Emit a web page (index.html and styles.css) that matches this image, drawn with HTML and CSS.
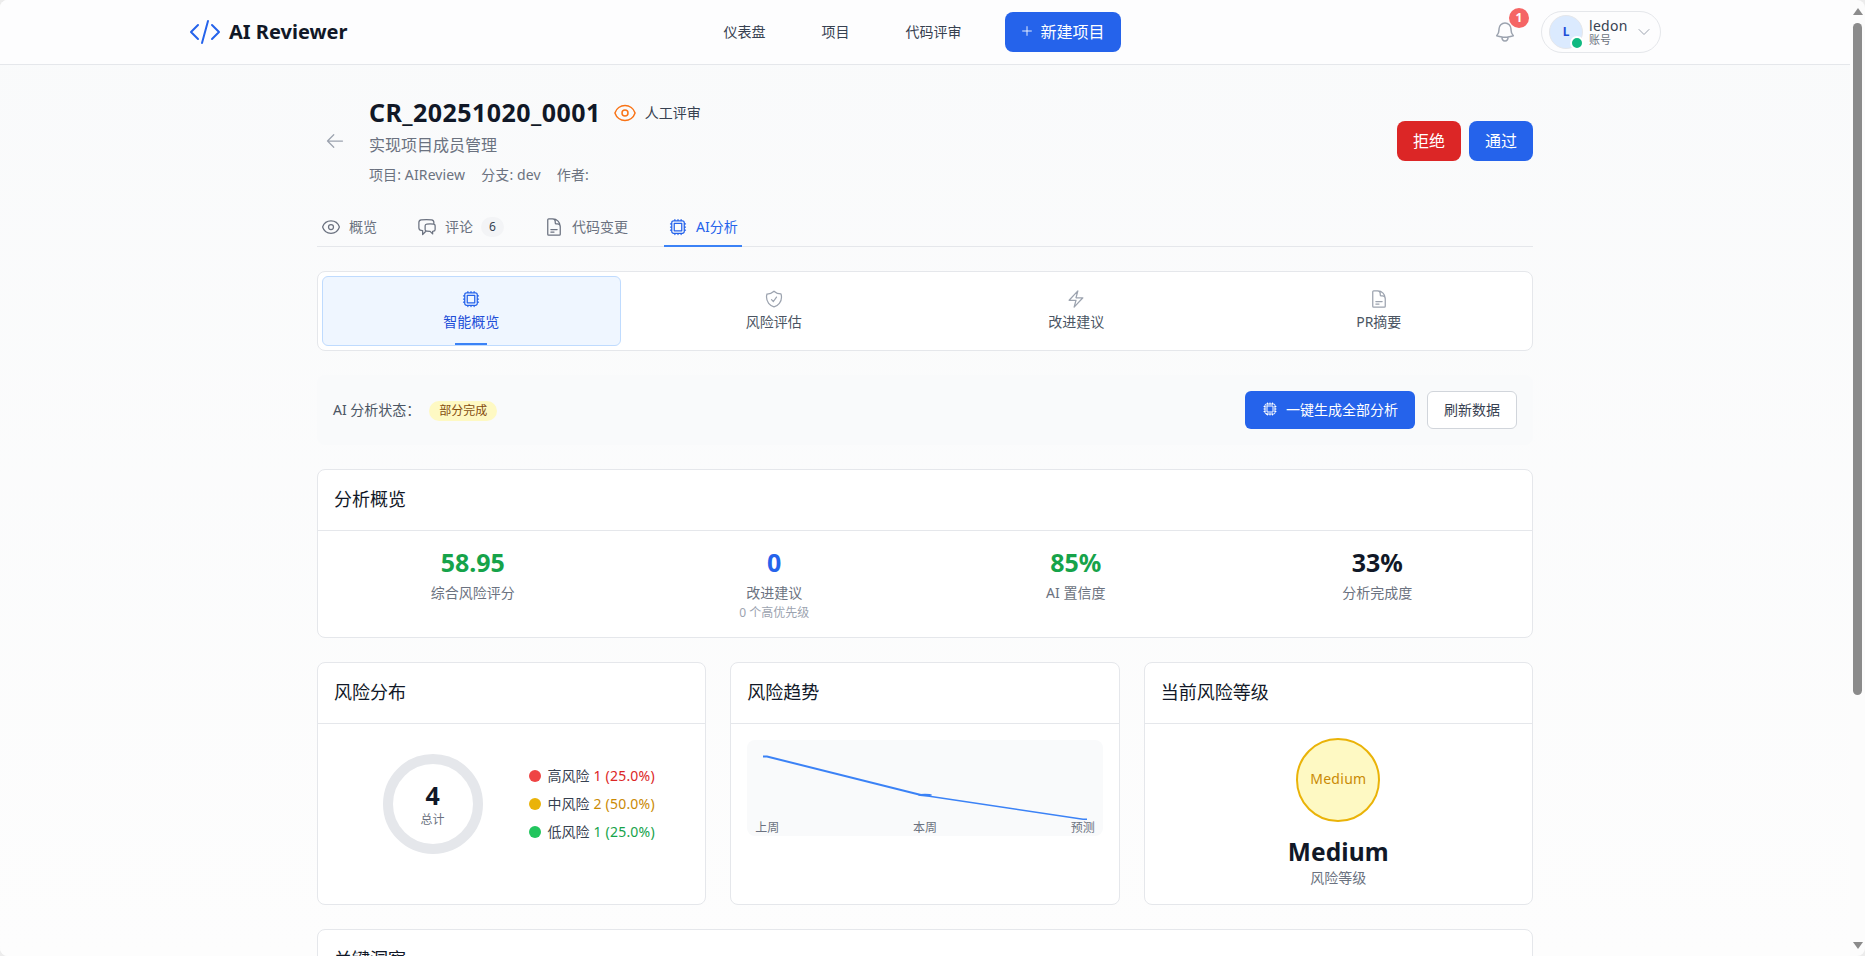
FILE: index.html
```html
<!DOCTYPE html>
<html lang="zh-CN">

<head>
  <meta charset="UTF-8">
  <meta name="viewport" content="width=device-width, initial-scale=1.0">
  <title>AI Reviewer</title>
  <link rel="stylesheet" href="styles.css">
</head>

<body>
  <!-- heroicons -->
  <svg class="sprite">
    <symbol id="i-code" viewBox="0 0 24 24"><path d="M17.25 6.75 22.5 12l-5.25 5.25m-10.5 0L1.5 12l5.25-5.25m7.5-3-4.5 16.5" /></symbol>
    <symbol id="i-plus" viewBox="0 0 24 24"><path d="M12 4.5v15m7.5-7.5h-15" /></symbol>
    <symbol id="i-bell" viewBox="0 0 24 24"><path d="M14.857 17.082a23.848 23.848 0 0 0 5.454-1.31A8.967 8.967 0 0 1 18 9.75V9A6 6 0 0 0 6 9v.75a8.967 8.967 0 0 1-2.312 6.022c1.733.64 3.56 1.085 5.455 1.31m5.714 0a24.255 24.255 0 0 1-5.714 0m5.714 0a3 3 0 1 1-5.714 0" /></symbol>
    <symbol id="i-down" viewBox="0 0 24 24"><path d="m19.5 8.25-7.5 7.5-7.5-7.5" /></symbol>
    <symbol id="i-back" viewBox="0 0 24 24"><path d="M10.5 19.5 3 12m0 0 7.5-7.5M3 12h18" /></symbol>
    <symbol id="i-eye" viewBox="0 0 24 24"><path d="M2.036 12.322a1.012 1.012 0 0 1 0-.639C3.423 7.51 7.36 4.5 12 4.5c4.638 0 8.573 3.007 9.963 7.178.07.207.07.431 0 .639C20.577 16.49 16.64 19.5 12 19.5c-4.638 0-8.573-3.007-9.963-7.178Z" /><path d="M15 12a3 3 0 1 1-6 0 3 3 0 0 1 6 0Z" /></symbol>
    <symbol id="i-chat" viewBox="0 0 24 24"><path d="M20.25 8.511c.884.284 1.5 1.128 1.5 2.097v4.286c0 1.136-.847 2.1-1.98 2.193-.34.027-.68.052-1.02.072v3.091l-3-3c-1.354 0-2.694-.055-4.02-.163a2.115 2.115 0 0 1-.825-.242m9.345-8.334a2.126 2.126 0 0 0-.476-.095 48.64 48.64 0 0 0-8.048 0c-1.131.094-1.976 1.057-1.976 2.192v4.286c0 .837.46 1.58 1.155 1.951m9.345-8.334V6.637c0-1.621-1.152-3.026-2.76-3.235A48.455 48.455 0 0 0 11.25 3c-2.115 0-4.198.137-6.24.402-1.608.209-2.76 1.614-2.76 3.235v6.226c0 1.621 1.152 3.026 2.76 3.235.577.075 1.157.14 1.74.194V21l4.155-4.155" /></symbol>
    <symbol id="i-doc" viewBox="0 0 24 24"><path d="M19.5 14.25v-2.625a3.375 3.375 0 0 0-3.375-3.375h-1.5A1.125 1.125 0 0 1 13.5 7.125v-1.5a3.375 3.375 0 0 0-3.375-3.375H8.25m0 12.75h7.5m-7.5 3H12M10.5 2.25H5.625c-.621 0-1.125.504-1.125 1.125v17.25c0 .621.504 1.125 1.125 1.125h12.75c.621 0 1.125-.504 1.125-1.125V11.25a9 9 0 0 0-9-9Z" /></symbol>
    <symbol id="i-chip" viewBox="0 0 24 24"><path d="M8.25 3v1.5M4.5 8.25H3m18 0h-1.5M4.5 12H3m18 0h-1.5m-15 3.75H3m18 0h-1.5M8.25 19.5V21M12 3v1.5m0 15V21m3.75-18v1.5m0 15V21m-9-1.5h10.5a2.25 2.25 0 0 0 2.25-2.25V6.75a2.25 2.25 0 0 0-2.25-2.25H6.75A2.25 2.25 0 0 0 4.5 6.75v10.5a2.25 2.25 0 0 0 2.25 2.25Zm.75-12h9v9h-9v-9Z" /></symbol>
    <symbol id="i-shield" viewBox="0 0 24 24"><path d="M9 12.75 11.25 15 15 9.75m-3-7.036A11.959 11.959 0 0 1 3.598 6 11.99 11.99 0 0 0 3 9.749c0 5.592 3.824 10.29 9 11.623 5.176-1.332 9-6.03 9-11.622 0-1.31-.21-2.571-.598-3.751h-.152c-3.196 0-6.1-1.248-8.25-3.285Z" /></symbol>
    <symbol id="i-bolt" viewBox="0 0 24 24"><path d="m3.75 13.5 10.5-11.25L12 10.5h8.25L9.75 21.75 12 13.5H3.75Z" /></symbol>
  </svg>

  <div class="page">
    <header class="topbar">
      <div class="topbar-inner">
        <a class="brand"><svg class="icon icon-32"><use href="#i-code" /></svg><span>AI Reviewer</span></a>
        <nav class="nav">
          <a>仪表盘</a>
          <a>项目</a>
          <a>代码评审</a>
          <button class="btn btn-primary btn-new"><svg class="icon icon-14"><use href="#i-plus" /></svg>新建项目</button>
        </nav>
        <div class="topbar-right">
          <div class="bell"><svg class="icon icon-24"><use href="#i-bell" /></svg><span class="bell-count">1</span></div>
          <div class="user">
            <div class="avatar">L<i class="online"></i></div>
            <div class="user-text"><span class="user-name">ledon</span><span class="user-role">账号</span></div>
            <svg class="icon icon-16"><use href="#i-down" /></svg>
          </div>
        </div>
      </div>
    </header>

    <main class="container">
      <section class="review-head">
        <svg class="icon icon-20 back"><use href="#i-back" /></svg>
        <div class="review-info">
          <div class="title-row">
            <h1>CR_20251020_0001</h1>
            <svg class="icon icon-24 orange"><use href="#i-eye" /></svg>
            <span>人工评审</span>
          </div>
          <p class="subtitle">实现项目成员管理</p>
          <div class="meta"><span>项目: AIReview</span><span>分支: dev</span><span>作者:</span></div>
        </div>
        <button class="btn btn-danger">拒绝</button>
        <button class="btn btn-primary">通过</button>
      </section>

      <div class="tabs">
        <a class="tab"><svg class="icon icon-20"><use href="#i-eye" /></svg>概览</a>
        <a class="tab"><svg class="icon icon-20"><use href="#i-chat" /></svg>评论<span class="tab-count">6</span></a>
        <a class="tab"><svg class="icon icon-20"><use href="#i-doc" /></svg>代码变更</a>
        <a class="tab active"><svg class="icon icon-20"><use href="#i-chip" /></svg>AI分析</a>
      </div>

      <div class="subtabs">
        <a class="subtab active"><svg class="icon icon-20"><use href="#i-chip" /></svg>智能概览</a>
        <a class="subtab"><svg class="icon icon-20"><use href="#i-shield" /></svg>风险评估</a>
        <a class="subtab"><svg class="icon icon-20"><use href="#i-bolt" /></svg>改进建议</a>
        <a class="subtab"><svg class="icon icon-20"><use href="#i-doc" /></svg>PR摘要</a>
      </div>

      <div class="status">
        <span class="status-label">AI 分析状态：</span>
        <span class="pill">部分完成</span>
        <button class="btn-sm btn-primary"><svg class="icon icon-16"><use href="#i-chip" /></svg>一键生成全部分析</button>
        <button class="btn-sm btn-plain">刷新数据</button>
      </div>

      <section class="card">
        <h2>分析概览</h2>
        <div class="stats">
          <div class="stat"><b class="green">58.95</b><span>综合风险评分</span></div>
          <div class="stat"><b class="blue">0</b><span>改进建议</span><small>0 个高优先级</small></div>
          <div class="stat"><b class="green">85%</b><span>AI 置信度</span></div>
          <div class="stat"><b>33%</b><span>分析完成度</span></div>
        </div>
      </section>

      <div class="cards">
        <section class="card">
          <h2>风险分布</h2>
          <div class="distribution">
            <div class="donut"><b>4</b><span>总计</span></div>
            <ul class="legend">
              <li class="high"><i></i>高风险 <em>1 (25.0%)</em></li>
              <li class="mid"><i></i>中风险 <em>2 (50.0%)</em></li>
              <li class="low"><i></i>低风险 <em>1 (25.0%)</em></li>
            </ul>
          </div>
        </section>
        <section class="card">
          <h2>风险趋势</h2>
          <div class="trend">
            <svg class="trend-line" viewBox="0 0 324 64">
              <polyline class="past" points="0,0.5 4,0.5 158,39" />
              <polyline class="forecast" points="158,39 320,63.3 324,63.3" />
              <ellipse cx="162" cy="39" rx="7" ry="1.3" />
            </svg>
            <div class="trend-labels"><span>上周</span><span>本周</span><span>预测</span></div>
          </div>
        </section>
        <section class="card">
          <h2>当前风险等级</h2>
          <div class="level">
            <div class="level-circle">Medium</div>
            <b>Medium</b>
            <span>风险等级</span>
          </div>
        </section>
      </div>

      <section class="card">
        <h2>关键洞察</h2>
      </section>
    </main>
  </div>

  <div class="scrollbar">
    <i class="arrow up"></i>
    <i class="thumb"></i>
    <i class="arrow down"></i>
  </div>
</body>

</html>
```
FILE: styles.css
```css
* {
  box-sizing: border-box;
  padding: 0;
  margin: 0;
}

html {
  overflow: hidden;
  background-color: #ececec;
}

body {
  display: flex;
  height: 956px;
  overflow: hidden;
  font-family: "Noto Sans", "Noto Sans CJK SC", sans-serif;
  font-size: 14px;
  line-height: 20px;
  color: #111827;
  background-color: #fcfcfc;
  border-radius: 8px;
}

button {
  font-family: inherit;
  border: none;
}

.sprite {
  display: none;
}

.icon {
  flex: none;
  fill: none;
  stroke: currentColor;
  stroke-width: 1.5;
  stroke-linecap: round;
  stroke-linejoin: round;
}

.icon-14 { width: 14px; height: 14px; }
.icon-16 { width: 16px; height: 16px; }
.icon-20 { width: 20px; height: 20px; }
.icon-24 { width: 24px; height: 24px; }
.icon-32 { width: 32px; height: 32px; }

.page {
  flex: 1;
  height: 956px;
  overflow: hidden;
  background: linear-gradient(#f9fafb, #fdfdfd);
}

/* top bar */
.topbar {
  height: 65px;
  background-color: #fdfdfe;
  border-bottom: 1px solid #e5e7eb;
}

.topbar-inner {
  display: grid;
  grid-template-columns: 1fr auto 1fr;
  align-items: center;
  width: 1472px;
  height: 64px;
  margin: 0 auto;
}

.brand {
  display: flex;
  align-items: center;
  gap: 8px;
  font-size: 20px;
  font-weight: 700;
}

.brand .icon {
  color: #2563eb;
}

.nav {
  display: flex;
  align-items: center;
  gap: 56px;
  margin-right: 6px;
  color: #374151;
}

.btn {
  display: flex;
  align-items: center;
  justify-content: center;
  width: 64px;
  height: 40px;
  padding-bottom: 2px;
  font-size: 16px;
  color: #fff;
  border-radius: 8px;
}

.btn-primary {
  color: #fff;
  background-color: #2563eb;
}

.btn-danger {
  background-color: #dc2626;
}

.btn-new {
  width: 116px;
  gap: 6px;
  margin-left: -13px;
}

.topbar-right {
  display: flex;
  align-items: center;
  justify-content: flex-end;
  gap: 24px;
}

.bell {
  position: relative;
  display: flex;
  color: #9ca3af;
}

.bell-count {
  position: absolute;
  top: -12px;
  right: -12px;
  width: 20px;
  height: 20px;
  font-size: 12px;
  font-weight: 700;
  line-height: 19px;
  text-align: center;
  color: #fff;
  background-color: #f56565;
  border-radius: 10px;
}

.user {
  display: flex;
  align-items: center;
  width: 120px;
  height: 42px;
  padding: 0 8px 0 7px;
  border: 1px solid #e5e7eb;
  border-radius: 21px;
}

.user .icon {
  margin-left: auto;
  color: #9ca3af;
}

.avatar {
  position: relative;
  width: 34px;
  height: 34px;
  margin-right: 6px;
  font-size: 12px;
  font-weight: 700;
  line-height: 32px;
  text-align: center;
  color: #1d4ed8;
  background-color: #dbeafe;
  border: 1px solid #e5e7eb;
  border-radius: 50%;
}

.online {
  position: absolute;
  right: -2px;
  bottom: -2px;
  width: 14px;
  height: 14px;
  background-color: #10b981;
  border: 2px solid #fff;
  border-radius: 50%;
}

.user-text {
  display: flex;
  flex-direction: column;
}

.user-name {
  line-height: 15px;
  letter-spacing: 0.3px;
  color: #374151;
}

.user-role {
  font-size: 11px;
  line-height: 13px;
  color: #6b7280;
}

/* review header */
.container {
  width: 1216px;
  margin: 0 auto;
  padding-top: 32px;
}

.review-head {
  display: flex;
  align-items: center;
  gap: 8px;
  height: 88px;
}

.back {
  margin: 0 16px 0 8px;
  color: #9ca3af;
}

.review-info {
  flex: 1;
}

.title-row {
  display: flex;
  align-items: center;
  height: 32px;
  color: #374151;
}

.title-row .icon {
  margin: 0 8px 0 12px;
}

h1 {
  padding-bottom: 2px;
  font-size: 25px;
  font-weight: 700;
  letter-spacing: 0.44px;
  color: #111827;
}

.orange {
  color: #f97316;
}

.subtitle {
  font-size: 16px;
  line-height: 24px;
  margin-top: 4px;
  color: #6b7280;
}

.meta {
  display: flex;
  gap: 16px;
  margin-top: 8px;
  letter-spacing: 0.12px;
  color: #6b7280;
}

/* tabs */
.tabs {
  display: flex;
  gap: 32px;
  height: 46px;
  margin-top: 16px;
  border-bottom: 1px solid #e5e7eb;
  color: #6b7280;
}

.tab {
  display: flex;
  align-items: center;
  gap: 8px;
  height: 46px;
  padding: 7px 4px 0;
  border-bottom: 2px solid transparent;
}

.tab.active {
  color: #2563eb;
  border-bottom-color: #3b82f6;
}

.tab-count {
  width: 23px;
  font-size: 12px;
  text-align: center;
  color: #374151;
  background-color: #f3f4f6;
  border-radius: 10px;
}

.subtabs {
  display: grid;
  grid-template-columns: repeat(4, 1fr);
  gap: 4px;
  height: 80px;
  margin-top: 24px;
  padding: 4px;
  background-color: #fff;
  border: 1px solid #e5e7eb;
  border-radius: 8px;
}

.subtab {
  display: flex;
  flex-direction: column;
  align-items: center;
  gap: 3px;
  padding-top: 13px;
  color: #4b5563;
}

.subtab .icon {
  color: #9ca3af;
}

.subtab.active {
  color: #1d4ed8;
  background-color: #eff6ff;
  border: 1px solid #bfdbfe;
  border-radius: 6px;
  padding-top: 12px;
}

.subtab.active .icon {
  color: #2563eb;
}

.subtab.active::after {
  content: "";
  width: 32px;
  height: 2px;
  margin-top: 8px;
  background-color: #3b82f6;
}

/* analysis status */
.status {
  display: flex;
  align-items: center;
  height: 70px;
  margin: 24px 0;
  padding: 0 16px;
  background-color: #f9fafb;
  border-radius: 8px;
  color: #4b5563;
}

.pill {
  margin: 2px auto 0 9px;
  padding: 0 10px;
  font-size: 12px;
  color: #854d0e;
  background-color: #fef9c3;
  border-radius: 10px;
}

.btn-sm {
  display: flex;
  align-items: center;
  justify-content: center;
  gap: 8px;
  width: 170px;
  height: 38px;
  padding-bottom: 2px;
  font-size: 14px;
  border-radius: 6px;
}

.btn-plain {
  width: 90px;
  margin-left: 12px;
  color: #374151;
  background-color: #fff;
  border: 1px solid #d1d5db;
}

/* cards */
.card {
  background-color: #fff;
  border: 1px solid #e5e7eb;
  border-radius: 8px;
}

h2 {
  height: 61px;
  padding: 0 16px;
  font-size: 18px;
  font-weight: 400;
  line-height: 58px;
  border-bottom: 1px solid #e5e7eb;
}

.stats {
  display: grid;
  grid-template-columns: repeat(4, 1fr);
  gap: 24px;
  padding: 15px 16px;
  height: 106px;
}

.stat {
  display: flex;
  flex-direction: column;
  align-items: center;
  color: #6b7280;
}

.stat b,
.donut b,
.level b {
  font-size: 25px;
  font-weight: 700;
  line-height: 32px;
  color: #111827;
}

.stat span {
  margin-top: 5px;
}

.stat small {
  font-size: 12px;
  color: #9ca3af;
}

.stat .green { color: #16a34a; }
.stat .blue { color: #2563eb; }

.cards {
  display: grid;
  grid-template-columns: repeat(3, 1fr);
  gap: 24px;
  margin: 24px 0;
}

.cards .card {
  height: 243px;
}

.distribution {
  display: flex;
  align-items: center;
  justify-content: center;
  gap: 46px;
  height: 160px;
  padding-left: 14px;
}

.donut {
  display: flex;
  flex-direction: column;
  align-items: center;
  width: 100px;
  height: 100px;
  padding-top: 15px;
  border: 10px solid #e5e7eb;
  border-radius: 50%;
}

.donut span {
  margin-top: 1px;
  font-size: 12px;
  line-height: 16px;
  color: #6b7280;
}

.legend {
  display: flex;
  flex-direction: column;
  gap: 8px;
  list-style: none;
  color: #374151;
}

.legend li {
  display: flex;
  align-items: center;
}

.legend i {
  width: 12px;
  height: 12px;
  margin-right: 7px;
  border-radius: 50%;
}

.legend em {
  margin-left: 4px;
  font-style: normal;
  letter-spacing: 0.2px;
}

.high i { background-color: #ef4444; }
.mid i { background-color: #eab308; }
.low i { background-color: #22c55e; }
.high em { color: #dc2626; }
.mid em { color: #ca8a04; }
.low em { color: #16a34a; }

.trend {
  height: 96px;
  margin: 16px;
  padding: 16px 8px 0;
  background-color: #f9fafb;
  border-radius: 8px;
}

.trend-line {
  display: block;
  width: 324px;
  height: 64px;
  margin: 0 auto;
  overflow: visible;
}

.trend-line polyline {
  fill: none;
  stroke: #3b82f6;
}

.trend-line .past {
  stroke-width: 2;
}

.trend-line .forecast {
  stroke-width: 1.4;
}

.trend-line ellipse {
  fill: #3b82f6;
}

.trend-labels {
  display: flex;
  justify-content: space-between;
  font-size: 12px;
  line-height: 16px;
  color: #6b7280;
}

.level {
  display: flex;
  flex-direction: column;
  align-items: center;
  padding-top: 14px;
  color: #6b7280;
}

.level-circle {
  width: 84px;
  height: 84px;
  line-height: 77px;
  letter-spacing: 0.3px;
  text-align: center;
  color: #ca8a04;
  background-color: #fef9c3;
  border: 2px solid #eab308;
  border-radius: 50%;
}

.level b {
  margin-top: 14px;
  font-size: 24.5px;
  letter-spacing: 0.1px;
}

/* window scrollbar */
.scrollbar {
  display: flex;
  flex-direction: column;
  align-items: center;
  width: 15px;
  height: 956px;
  padding: 8px 0 7px;
}

.thumb {
  width: 9px;
  height: 672px;
  margin: 8px 0 auto;
  background-color: #8b8b8b;
  border-radius: 5px;
}

.arrow {
  border: 5px solid transparent;
}

.up {
  border-top: none;
  border-bottom: 7px solid #8b8b8b;
}

.down {
  border-bottom: none;
  border-top: 7px solid #8b8b8b;
}
```
